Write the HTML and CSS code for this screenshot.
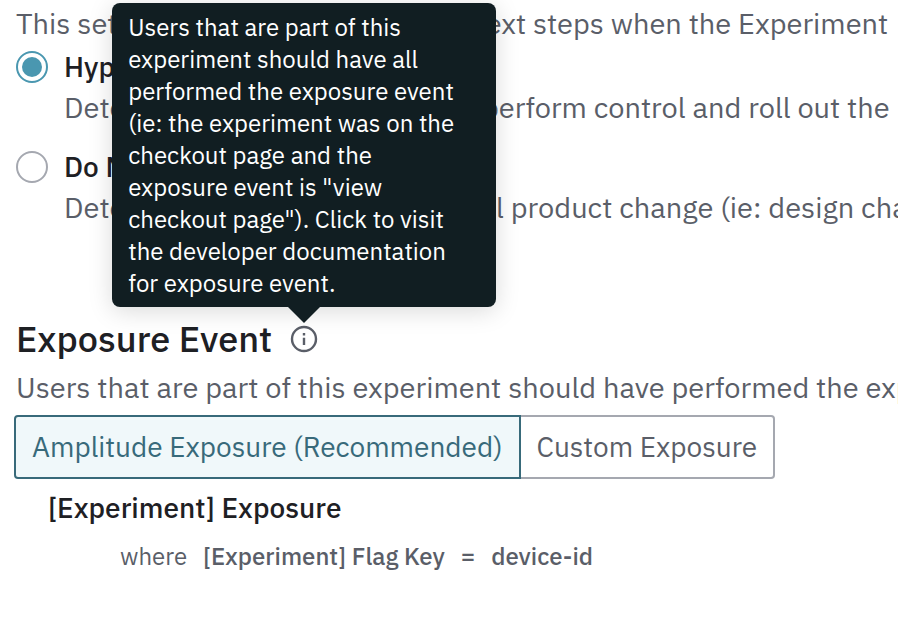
FILE: index.html
```
<!DOCTYPE html>
<html lang="en">
  <head>
    <meta charset="UTF-8" />
    <meta name="viewport" content="width=device-width, initial-scale=1" />
    <title>Experiment Settings</title>
    <link rel="stylesheet" href="styles.css">
  </head>
  <body>
    <main class="settings">
      <section class="type-section">
        <p class="hint">This setting can help us determine next steps when the Experiment</p>
        <div class="option">
          <input type="radio" id="hypothesis" name="type" checked />
          <label for="hypothesis">Hypothesis Testing</label>
          <p class="hint">Determine if the variant may outperform control and roll out the</p>
        </div>
        <div class="option">
          <input type="radio" id="noHarm" name="type" />
          <label for="noHarm">Do No Harm</label>
          <p class="hint">Determine the outcome of a small product change (ie: design changes).</p>
        </div>
      </section>

      <section>
        <div class="title-row">
          <h2>Exposure Event</h2>
          <a class="info" href="#docs" aria-label="Exposure event documentation" aria-describedby="exposureTip">
            <svg width="28" height="28" viewBox="0 0 28 28" fill="none">
              <circle cx="14" cy="14" r="12" stroke="#5a5e68" stroke-width="2.4" />
              <path d="M14 12.8v7.2M14 8v2.6" stroke="#5a5e68" stroke-width="2.4" />
            </svg>
            <span class="tooltip" id="exposureTip" role="tooltip">Users that are part of this experiment should have all performed the exposure event (ie: the experiment was on the checkout page and the exposure event is "view checkout page"). Click to visit the developer documentation for exposure event.</span>
          </a>
        </div>
        <p class="hint">Users that are part of this experiment should have performed the exposure event.</p>
        <div class="segmented">
          <button type="button" class="active" aria-pressed="true">Amplitude Exposure (Recommended)</button>
          <button type="button" aria-pressed="false">Custom Exposure</button>
        </div>
        <div class="event">
          <h3>[Experiment] Exposure</h3>
          <p class="filter">
            <span>where</span>
            <strong>[Experiment] Flag Key</strong>
            <strong>=</strong>
            <strong>device-id</strong>
          </p>
        </div>
      </section>
    </main>
  </body>
</html>
```

FILE: styles.css
```
* {
  box-sizing: border-box;
}
body {
  margin: 0;
  font-family: "IBM Plex Sans", Roboto, sans-serif;
  font-size: 28px;
  line-height: 40px;
  color: #1e2024;
  background-color: #fff;
}
h2,
h3,
p {
  margin: 0;
}
.settings {
  padding: 3px 0 48px 16px;
  overflow: hidden;
}
.hint {
  color: #5a5e68;
  font-size: 29px;
  white-space: nowrap;
}
.type-section {
  margin-bottom: 92px;
}
.option {
  display: grid;
  grid-template-columns: 32px 1fr;
  column-gap: 16px;
  align-items: center;
  margin: 4px 0 20px;
}
.option label {
  font-weight: 500;
}
.option .hint {
  grid-column: 2;
}
.option input {
  appearance: none;
  width: 32px;
  height: 32px;
  margin: 0;
  border: 2px solid #a5a8b0;
  border-radius: 50%;
}
.option input:checked {
  padding: 4px;
  border-color: #4a97b0;
  background: #4a97b0 content-box;
}
.title-row {
  display: flex;
  align-items: center;
  gap: 18px;
  margin-bottom: 8px;
}
.title-row h2 {
  font-size: 36px;
  font-weight: 500;
}
.info {
  position: relative;
  display: flex;
}
.tooltip {
  position: absolute;
  bottom: 46px;
  left: 50%;
  width: 384px;
  padding: 8px 24px 8px 16px;
  transform: translateX(-50%);
  border-radius: 8px;
  background-color: #111e22;
  box-shadow: 0 4px 24px rgba(0, 0, 0, 0.15);
  color: #fff;
  font-size: 24px;
  line-height: 32px;
}
.tooltip::after {
  content: "";
  position: absolute;
  top: 100%;
  left: 50%;
  margin-left: -16px;
  border: 16px solid transparent;
  border-top-color: #111e22;
  border-bottom: 0;
}
.segmented {
  display: flex;
  margin: 8px 0 9px -2px;
}
.segmented button {
  padding: 10px 16px;
  border: 2px solid #a5a8b0;
  border-left: 0;
  border-radius: 0 4px 4px 0;
  background-color: #fff;
  color: #5a5e68;
  font: inherit;
  cursor: pointer;
}
.segmented .active {
  border: 2px solid #386a7a;
  border-radius: 4px 0 0 4px;
  background-color: #f0f8fa;
  color: #386a7a;
}
.event {
  padding-left: 32px;
}
.event h3 {
  font-size: 28px;
  font-weight: 500;
}
.filter {
  display: flex;
  gap: 16px;
  margin-top: 12px;
  padding-left: 72px;
  color: #5a5e68;
  font-size: 24px;
  line-height: 32px;
}
.filter strong {
  font-weight: 500;
}
```
